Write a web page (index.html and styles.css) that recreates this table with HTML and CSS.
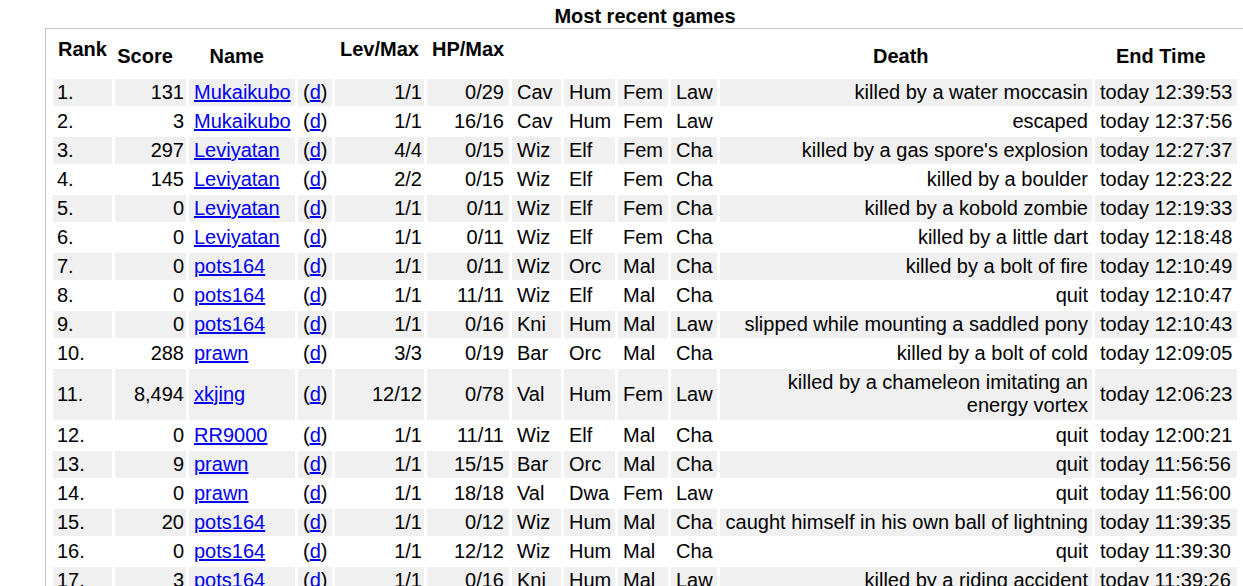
FILE: index.html
```html
<!DOCTYPE html>
<html lang="en">
<head>
<meta charset="utf-8">
<title>Most recent games</title>
<link rel="stylesheet" href="styles.css">
</head>
<body>
<div class="page">
  <div class="title">Most recent games</div>
  <div class="box">
    <table class="games">
      <thead>
        <tr class="head">
          <th class="c-rank top">Rank</th>
          <th class="c-score mid">Score</th>
          <th class="c-name mid">Name</th>
          <th class="c-d"></th>
          <th class="c-lev top">Lev/Max</th>
          <th class="c-hp top">HP/Max</th>
          <th class="c-role"></th>
          <th class="c-race"></th>
          <th class="c-gender"></th>
          <th class="c-align"></th>
          <th class="c-death mid">Death</th>
          <th class="c-end mid">End Time</th>
        </tr>
      </thead>
      <tbody>
        <tr class="odd"><td class="rank">1.</td><td class="score">131</td><td class="name"><a href="#">Mukaikubo</a></td><td class="d">(<a href="#">d</a>)</td><td class="lev">1/1</td><td class="hp">0/29</td><td>Cav</td><td>Hum</td><td>Fem</td><td>Law</td><td class="death">killed by a water moccasin</td><td class="end">today 12:39:53</td></tr>
        <tr><td class="rank">2.</td><td class="score">3</td><td class="name"><a href="#">Mukaikubo</a></td><td class="d">(<a href="#">d</a>)</td><td class="lev">1/1</td><td class="hp">16/16</td><td>Cav</td><td>Hum</td><td>Fem</td><td>Law</td><td class="death">escaped</td><td class="end">today 12:37:56</td></tr>
        <tr class="odd"><td class="rank">3.</td><td class="score">297</td><td class="name"><a href="#">Leviyatan</a></td><td class="d">(<a href="#">d</a>)</td><td class="lev">4/4</td><td class="hp">0/15</td><td>Wiz</td><td>Elf</td><td>Fem</td><td>Cha</td><td class="death">killed by a gas spore's explosion</td><td class="end">today 12:27:37</td></tr>
        <tr><td class="rank">4.</td><td class="score">145</td><td class="name"><a href="#">Leviyatan</a></td><td class="d">(<a href="#">d</a>)</td><td class="lev">2/2</td><td class="hp">0/15</td><td>Wiz</td><td>Elf</td><td>Fem</td><td>Cha</td><td class="death">killed by a boulder</td><td class="end">today 12:23:22</td></tr>
        <tr class="odd"><td class="rank">5.</td><td class="score">0</td><td class="name"><a href="#">Leviyatan</a></td><td class="d">(<a href="#">d</a>)</td><td class="lev">1/1</td><td class="hp">0/11</td><td>Wiz</td><td>Elf</td><td>Fem</td><td>Cha</td><td class="death">killed by a kobold zombie</td><td class="end">today 12:19:33</td></tr>
        <tr><td class="rank">6.</td><td class="score">0</td><td class="name"><a href="#">Leviyatan</a></td><td class="d">(<a href="#">d</a>)</td><td class="lev">1/1</td><td class="hp">0/11</td><td>Wiz</td><td>Elf</td><td>Fem</td><td>Cha</td><td class="death">killed by a little dart</td><td class="end">today 12:18:48</td></tr>
        <tr class="odd"><td class="rank">7.</td><td class="score">0</td><td class="name"><a href="#">pots164</a></td><td class="d">(<a href="#">d</a>)</td><td class="lev">1/1</td><td class="hp">0/11</td><td>Wiz</td><td>Orc</td><td>Mal</td><td>Cha</td><td class="death">killed by a bolt of fire</td><td class="end">today 12:10:49</td></tr>
        <tr><td class="rank">8.</td><td class="score">0</td><td class="name"><a href="#">pots164</a></td><td class="d">(<a href="#">d</a>)</td><td class="lev">1/1</td><td class="hp">11/11</td><td>Wiz</td><td>Elf</td><td>Mal</td><td>Cha</td><td class="death">quit</td><td class="end">today 12:10:47</td></tr>
        <tr class="odd"><td class="rank">9.</td><td class="score">0</td><td class="name"><a href="#">pots164</a></td><td class="d">(<a href="#">d</a>)</td><td class="lev">1/1</td><td class="hp">0/16</td><td>Kni</td><td>Hum</td><td>Mal</td><td>Law</td><td class="death">slipped while mounting a saddled pony</td><td class="end">today 12:10:43</td></tr>
        <tr><td class="rank">10.</td><td class="score">288</td><td class="name"><a href="#">prawn</a></td><td class="d">(<a href="#">d</a>)</td><td class="lev">3/3</td><td class="hp">0/19</td><td>Bar</td><td>Orc</td><td>Mal</td><td>Cha</td><td class="death">killed by a bolt of cold</td><td class="end">today 12:09:05</td></tr>
        <tr class="odd wrapped"><td class="rank">11.</td><td class="score">8,494</td><td class="name"><a href="#">xkjing</a></td><td class="d">(<a href="#">d</a>)</td><td class="lev">12/12</td><td class="hp">0/78</td><td>Val</td><td>Hum</td><td>Fem</td><td>Law</td><td class="death">killed by a chameleon imitating an energy vortex</td><td class="end">today 12:06:23</td></tr>
        <tr><td class="rank">12.</td><td class="score">0</td><td class="name"><a href="#">RR9000</a></td><td class="d">(<a href="#">d</a>)</td><td class="lev">1/1</td><td class="hp">11/11</td><td>Wiz</td><td>Elf</td><td>Mal</td><td>Cha</td><td class="death">quit</td><td class="end">today 12:00:21</td></tr>
        <tr class="odd"><td class="rank">13.</td><td class="score">9</td><td class="name"><a href="#">prawn</a></td><td class="d">(<a href="#">d</a>)</td><td class="lev">1/1</td><td class="hp">15/15</td><td>Bar</td><td>Orc</td><td>Mal</td><td>Cha</td><td class="death">quit</td><td class="end">today 11:56:56</td></tr>
        <tr><td class="rank">14.</td><td class="score">0</td><td class="name"><a href="#">prawn</a></td><td class="d">(<a href="#">d</a>)</td><td class="lev">1/1</td><td class="hp">18/18</td><td>Val</td><td>Dwa</td><td>Fem</td><td>Law</td><td class="death">quit</td><td class="end">today 11:56:00</td></tr>
        <tr class="odd"><td class="rank">15.</td><td class="score">20</td><td class="name"><a href="#">pots164</a></td><td class="d">(<a href="#">d</a>)</td><td class="lev">1/1</td><td class="hp">0/12</td><td>Wiz</td><td>Hum</td><td>Mal</td><td>Cha</td><td class="death">caught himself in his own ball of lightning</td><td class="end">today 11:39:35</td></tr>
        <tr><td class="rank">16.</td><td class="score">0</td><td class="name"><a href="#">pots164</a></td><td class="d">(<a href="#">d</a>)</td><td class="lev">1/1</td><td class="hp">12/12</td><td>Wiz</td><td>Hum</td><td>Mal</td><td>Cha</td><td class="death">quit</td><td class="end">today 11:39:30</td></tr>
        <tr class="odd"><td class="rank">17.</td><td class="score">3</td><td class="name"><a href="#">pots164</a></td><td class="d">(<a href="#">d</a>)</td><td class="lev">1/1</td><td class="hp">0/16</td><td>Kni</td><td>Hum</td><td>Mal</td><td>Law</td><td class="death">killed by a riding accident</td><td class="end">today 11:39:26</td></tr>
      </tbody>
    </table>
  </div>
</div>
</body>
</html>
```
FILE: styles.css
```css
html, body {
  margin: 0;
  padding: 0;
  background: #ffffff;
}

body {
  font-family: "Liberation Sans", Arial, sans-serif;
  font-size: 20px;
  color: #000000;
}

.page {
  width: 1200px;
  margin-left: 45px;
}

.title {
  font-weight: bold;
  text-align: center;
  margin: 5px 0 0;
}

.box {
  box-sizing: border-box;
  width: 1200px;
  border: 1px solid #c4c4c4;
  padding: 5px 4px;
}

.games {
  table-layout: fixed;
  width: 100%;
  border-collapse: separate;
  border-spacing: 3px 2px;
}

.games th,
.games td {
  box-sizing: border-box;
  padding: 2px 5px;
  white-space: nowrap;
}

.games th {
  font-weight: bold;
  text-align: center;
}

.head {
  height: 41px;
}

.games th.top { vertical-align: top; }
.games th.mid { vertical-align: middle; }

.c-rank { width: 59px; }
.c-score { width: 71px; }
.c-name { width: 106px; }
.c-d { width: 34px; }
.c-lev { width: 89px; }
.c-hp { width: 82px; }
.c-role { width: 49px; }
.c-race { width: 51px; }
.c-gender { width: 50px; }
.c-align { width: 46px; }
.c-death { width: 372px; }
.c-end { width: 142px; }

.games th.c-score { padding: 2px 13px 2px 2px; }
.games th.c-name,
.games th.c-death,
.games th.c-end { padding: 2px 15.5px 2px 5px; }

.games td {
  text-align: left;
  vertical-align: middle;
}

.games tr.odd td {
  background: #f0f0f0;
}

.games td.rank { padding-left: 4px; }
.games td.score { text-align: right; padding-right: 2px; }
.games td.lev { text-align: right; padding-right: 2px; }
.games td.hp { text-align: right; padding-right: 5px; }
.games td.death {
  text-align: right;
  white-space: normal;
  padding: 2px 4px;
}
.games tr.wrapped td.death {
  padding-bottom: 3px;
}

.games a {
  color: #0000ee;
  text-decoration: underline;
}
```
